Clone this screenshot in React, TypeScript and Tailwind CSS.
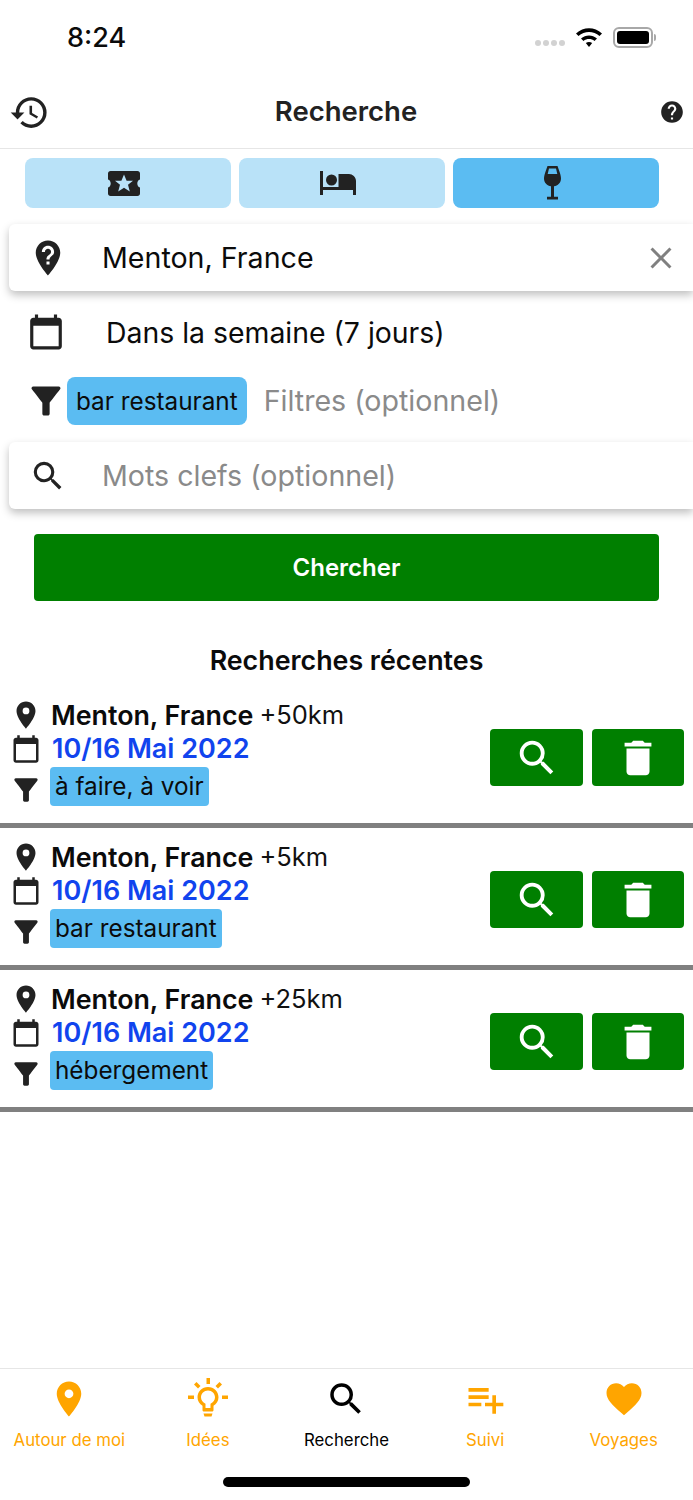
import {
  MdCalendarToday,
  MdClose,
  MdDelete,
  MdFavorite,
  MdFilterAlt,
  MdHelp,
  MdHistory,
  MdNotListedLocation,
  MdPlace,
  MdPlaylistAdd,
  MdSearch,
} from "react-icons/md";

const recents = [
  { km: "+50km", tag: "à faire, à voir" },
  { km: "+5km", tag: "bar restaurant" },
  { km: "+25km", tag: "hébergement" },
];

const BulbIcon = ({ className }: { className?: string }) => (
  <svg viewBox="-3 -2 46 46" className={className} fill="currentColor">
    <rect x="18.5" y="0" width="3.5" height="6" />
    <rect x="0" y="17.5" width="6" height="3.5" />
    <rect x="34" y="17.5" width="6" height="3.5" />
    <path d="M6 6.5 8.5 4 12.5 8 10 10.5Z" />
    <path d="M34 6.5 31.5 4 27.5 8 30 10.5Z" />
    <path
      fillRule="evenodd"
      d="M20 9C14 9 9.5 13.6 9.5 19.2C9.5 23 11.6 26 14.5 27.8V32C14.5 33 15.3 33.5 16 33.5H24C24.7 33.5 25.5 33 25.5 32V27.8C28.4 26 30.5 23 30.5 19.2C30.5 13.6 26 9 20 9ZM20 12.5C24 12.5 27 15.6 27 19.2C27 22 25.3 24.3 22.5 25.7V30H17.5V25.7C14.7 24.3 13 22 13 19.2C13 15.6 16 12.5 20 12.5Z"
    />
    <path d="M15.5 35.5H24.5L23.5 38.5H16.5Z" />
  </svg>
);

const tabs = [
  { icon: MdPlace, label: "Autour de moi", active: false, size: "w-[42px] h-[42px] m-[2px]" },
  { icon: BulbIcon, label: "Idées", active: false, size: "w-[46px] h-[46px]" },
  { icon: MdSearch, label: "Recherche", active: true, size: "w-[42px] h-[42px] m-[2px]" },
  { icon: MdPlaylistAdd, label: "Suivi", active: false, size: "w-[44px] h-[44px] m-[1px]" },
  { icon: MdFavorite, label: "Voyages", active: false, size: "w-[42px] h-[42px] m-[2px]" },
];

const TicketIcon = () => (
  <svg width="32" height="25" viewBox="0 0 32 25" fill="#222">
    <path
      fillRule="evenodd"
      d="M2.5 0H29.5C30.9 0 32 1.1 32 2.5V8.5C30.2 9 29.3 10.6 29.3 12.5C29.3 14.4 30.2 16 32 16.5V22.5C32 23.9 30.9 25 29.5 25H2.5C1.1 25 0 23.9 0 22.5V16.5C1.8 16 2.7 14.4 2.7 12.5C2.7 10.6 1.8 9 0 8.5V2.5C0 1.1 1.1 0 2.5 0ZM16 3.5 18.6 9.8H25L20 13.8 21.8 20.5 16 16.8 10.2 20.5 12 13.8 7 9.8H13.4Z"
    />
  </svg>
);

const BedIcon = () => (
  <svg width="36" height="24" viewBox="0 0 36 24" fill="#222">
    <rect x="0" y="0" width="3" height="24" />
    <circle cx="11.5" cy="9" r="5.5" />
    <path d="M18.5 3H29C32.5 3 36 6 36 10V24H33V19H3V16H18.5Z" />
  </svg>
);

const WineIcon = () => (
  <svg width="17" height="34" viewBox="0 0 17 34" fill="#222">
    <path
      fillRule="evenodd"
      d="M3.5 0H13.5L15.6 6C16.6 9 17 11 17 12.5C17 16.8 13.8 19.8 10 20.2V30.8H14V33.5H3V30.8H7V20.2C3.2 19.8 0 16.8 0 12.5C0 11 0.4 9 1.4 6ZM5 2.5 3.7 8H13.3L12 2.5Z"
    />
  </svg>
);

const StatusBar = () => (
  <div className="h-[76px] flex items-start justify-between pl-[67px] pr-[37px]">
    <span className="mt-[22px] text-[27px] leading-[32px] font-medium text-[#0b0b0b]">8:24</span>
    <div className="mt-[26px] flex items-center">
      <div className="flex gap-[2px] mt-[11px] mr-[10px]">
        <span className="w-[6px] h-[6px] rounded-full bg-[#d2d2d2]" />
        <span className="w-[6px] h-[6px] rounded-full bg-[#d2d2d2]" />
        <span className="w-[6px] h-[6px] rounded-full bg-[#d2d2d2]" />
        <span className="w-[6px] h-[6px] rounded-full bg-[#d2d2d2]" />
      </div>
      <svg width="28" height="22" viewBox="0 0 28 22" className="mr-[10px]">
        <path d="M1 7.5C8.5 0.5 19.5 0.5 27 7.5L24.5 10C18.5 4.8 9.5 4.8 3.5 10Z" fill="#000" />
        <path d="M6 12.5C10.8 8.4 17.2 8.4 22 12.5L19.5 15C16.3 12.4 11.7 12.4 8.5 15Z" fill="#000" />
        <path d="M10.8 17C12.8 15.5 15.2 15.5 17.2 17L14 21Z" fill="#000" />
      </svg>
      <div className="relative w-[40px] h-[21px] mr-[3px] rounded-[6px] border-2 border-[#a8a8a8] p-[2px]">
        <div className="w-full h-full rounded-[3px] bg-black" />
        <span className="absolute right-[-5px] top-[5px] w-[2px] h-[7px] rounded-r bg-[#a8a8a8]" />
      </div>
    </div>
  </div>
);

const RecentRow = ({ km, tag }: { km: string; tag: string }) => (
  <div className="h-[142px] border-b-[5px] border-[#808080] pl-[13px] pr-[9px] pt-[11px] flex items-start justify-between">
    <div className="flex flex-col">
      <div className="flex items-center h-[36px]">
        <MdPlace className="w-[26px] h-[36px] text-[#222]" style={{ transform: "scale(1.25)" }} />
        <span className="ml-[12px] text-[26.8px] leading-[36px] font-semibold text-[#0b0b0b]">Menton, France</span>
        <span className="ml-[6px] text-[25.5px] leading-[36px] text-[#111]">{km}</span>
      </div>
      <div className="flex items-center h-[32px]">
        <MdCalendarToday className="w-[30px] h-[30px] -mx-[2px] text-[#222]" />
        <span className="ml-[13px] text-[27px] leading-[32px] font-semibold text-[#1144ee]">10/16 Mai 2022</span>
      </div>
      <div className="flex items-center">
        <MdFilterAlt className="w-[26px] h-[36px] text-[#222] mt-[7px]" style={{ transform: "scale(1.35)" }} />
        <span className="ml-[11px] h-[39px] px-[5px] rounded-[4px] bg-[#5bbcf2] text-[24.3px] leading-[39px] text-[#0b0b0b]">{tag}</span>
      </div>
    </div>
    <div className="flex gap-[9px] mt-[32px]">
      <div className="w-[93px] h-[57px] rounded-[4px] bg-[#007f00] flex items-center justify-center">
        <MdSearch className="w-[46px] h-[46px] text-white" />
      </div>
      <div className="w-[92px] h-[57px] rounded-[4px] bg-[#007f00] flex items-center justify-center">
        <MdDelete className="w-[46px] h-[46px] text-white" />
      </div>
    </div>
  </div>
);

export default function App() {
  return (
    <div className="w-[693px] h-[1500px] overflow-hidden bg-white flex flex-col font-['Inter',sans-serif]">
      <StatusBar />

      {/* Header */}
      <div className="h-[73px] border-b border-[#e6e6e6] pl-[9px] pr-[8px] flex items-center">
        <div className="flex-1">
          <MdHistory className="w-[41px] h-[41px] text-[#222]" />
        </div>
        <span className="mr-[2px] text-[27.5px] font-semibold text-[#222]">Recherche</span>
        <div className="flex-1 flex justify-end">
          <MdHelp className="w-[26px] h-[26px] text-[#222]" />
        </div>
      </div>

      {/* Category tabs */}
      <div className="flex gap-[8px] pl-[25px] pr-[34px] mt-[9px]">
        <div className="flex-1 h-[50px] rounded-[8px] bg-[#b9e2f8] flex items-center justify-center pr-[8px]">
          <TicketIcon />
        </div>
        <div className="flex-1 h-[50px] rounded-[8px] bg-[#b9e2f8] flex items-center justify-center pr-[8px]">
          <BedIcon />
        </div>
        <div className="flex-1 h-[50px] rounded-[8px] bg-[#5bbcf2] flex items-center justify-center pr-[8px]">
          <WineIcon />
        </div>
      </div>

      {/* Location */}
      <div className="ml-[9px] mt-[16px] h-[67px] rounded-l-[6px] bg-white shadow-[0_4px_8px_rgba(0,0,0,0.25)] flex items-center pl-[18px] pr-[14px]">
        <MdNotListedLocation className="w-[42px] h-[42px] text-[#222]" />
        <span className="ml-[33px] pt-[2px] text-[28.6px] text-[#0b0b0b]">Menton, France</span>
        <MdClose className="ml-auto w-[36px] h-[36px] text-[#808080]" />
      </div>

      {/* Dates */}
      <div className="h-[82px] flex items-center pl-[27px]">
        <MdCalendarToday className="w-[38px] h-[38px] text-[#222]" />
        <span className="ml-[41px] pt-[2px] text-[28.4px] text-[#0b0b0b]">Dans la semaine (7 jours)</span>
      </div>

      {/* Filters */}
      <div className="flex items-center pl-[27px] mt-[4px]">
        <MdFilterAlt className="w-[38px] h-[48px] text-[#222]" style={{ transform: "scale(1.15)" }} />
        <span className="ml-[2px] h-[48px] px-[9px] rounded-[8px] bg-[#5bbcf2] text-[24.3px] leading-[48px] text-[#0b0b0b]">bar restaurant</span>
        <span className="ml-[17px] text-[28.6px] text-[#8a8a8a]">Filtres (optionnel)</span>
      </div>

      {/* Keywords */}
      <div className="ml-[9px] mt-[17px] h-[67px] rounded-l-[6px] bg-white shadow-[0_4px_8px_rgba(0,0,0,0.25)] flex items-center pl-[20px]">
        <MdSearch className="w-[38px] h-[38px] text-[#222]" />
        <span className="ml-[35px] pt-[2px] text-[28.6px] text-[#8a8a8a]">Mots clefs (optionnel)</span>
      </div>

      <div className="mt-[25px] mx-[34px] h-[67px] rounded-[4px] bg-[#007f00] flex items-center justify-center">
        <span className="text-[24px] font-semibold text-white">Chercher</span>
      </div>

      <div className="mt-[41px] text-center text-[26.8px] leading-[36px] font-semibold text-[#0b0b0b]">Recherches récentes</div>

      <div className="mt-[8px]">
        {recents.map((r) => (
          <RecentRow key={r.km} km={r.km} tag={r.tag} />
        ))}
      </div>

      {/* Tab bar */}
      <div className="mt-auto h-[132px] border-t border-[#e6e6e6] flex flex-col">
        <div className="flex pt-[7px]">
          {tabs.map(({ icon: Icon, label, active, size }) => (
            <div key={label} className={`flex-1 flex flex-col items-center ${active ? "text-black" : "text-[#ffa500]"}`}>
              <Icon className={size} />
              <span className="mt-[7px] text-[16.8px] leading-[22px]">{label}</span>
            </div>
          ))}
        </div>
        <div className="mt-auto mb-[13px] mx-auto w-[247px] h-[10px] rounded-full bg-black" />
      </div>
    </div>
  );
}
